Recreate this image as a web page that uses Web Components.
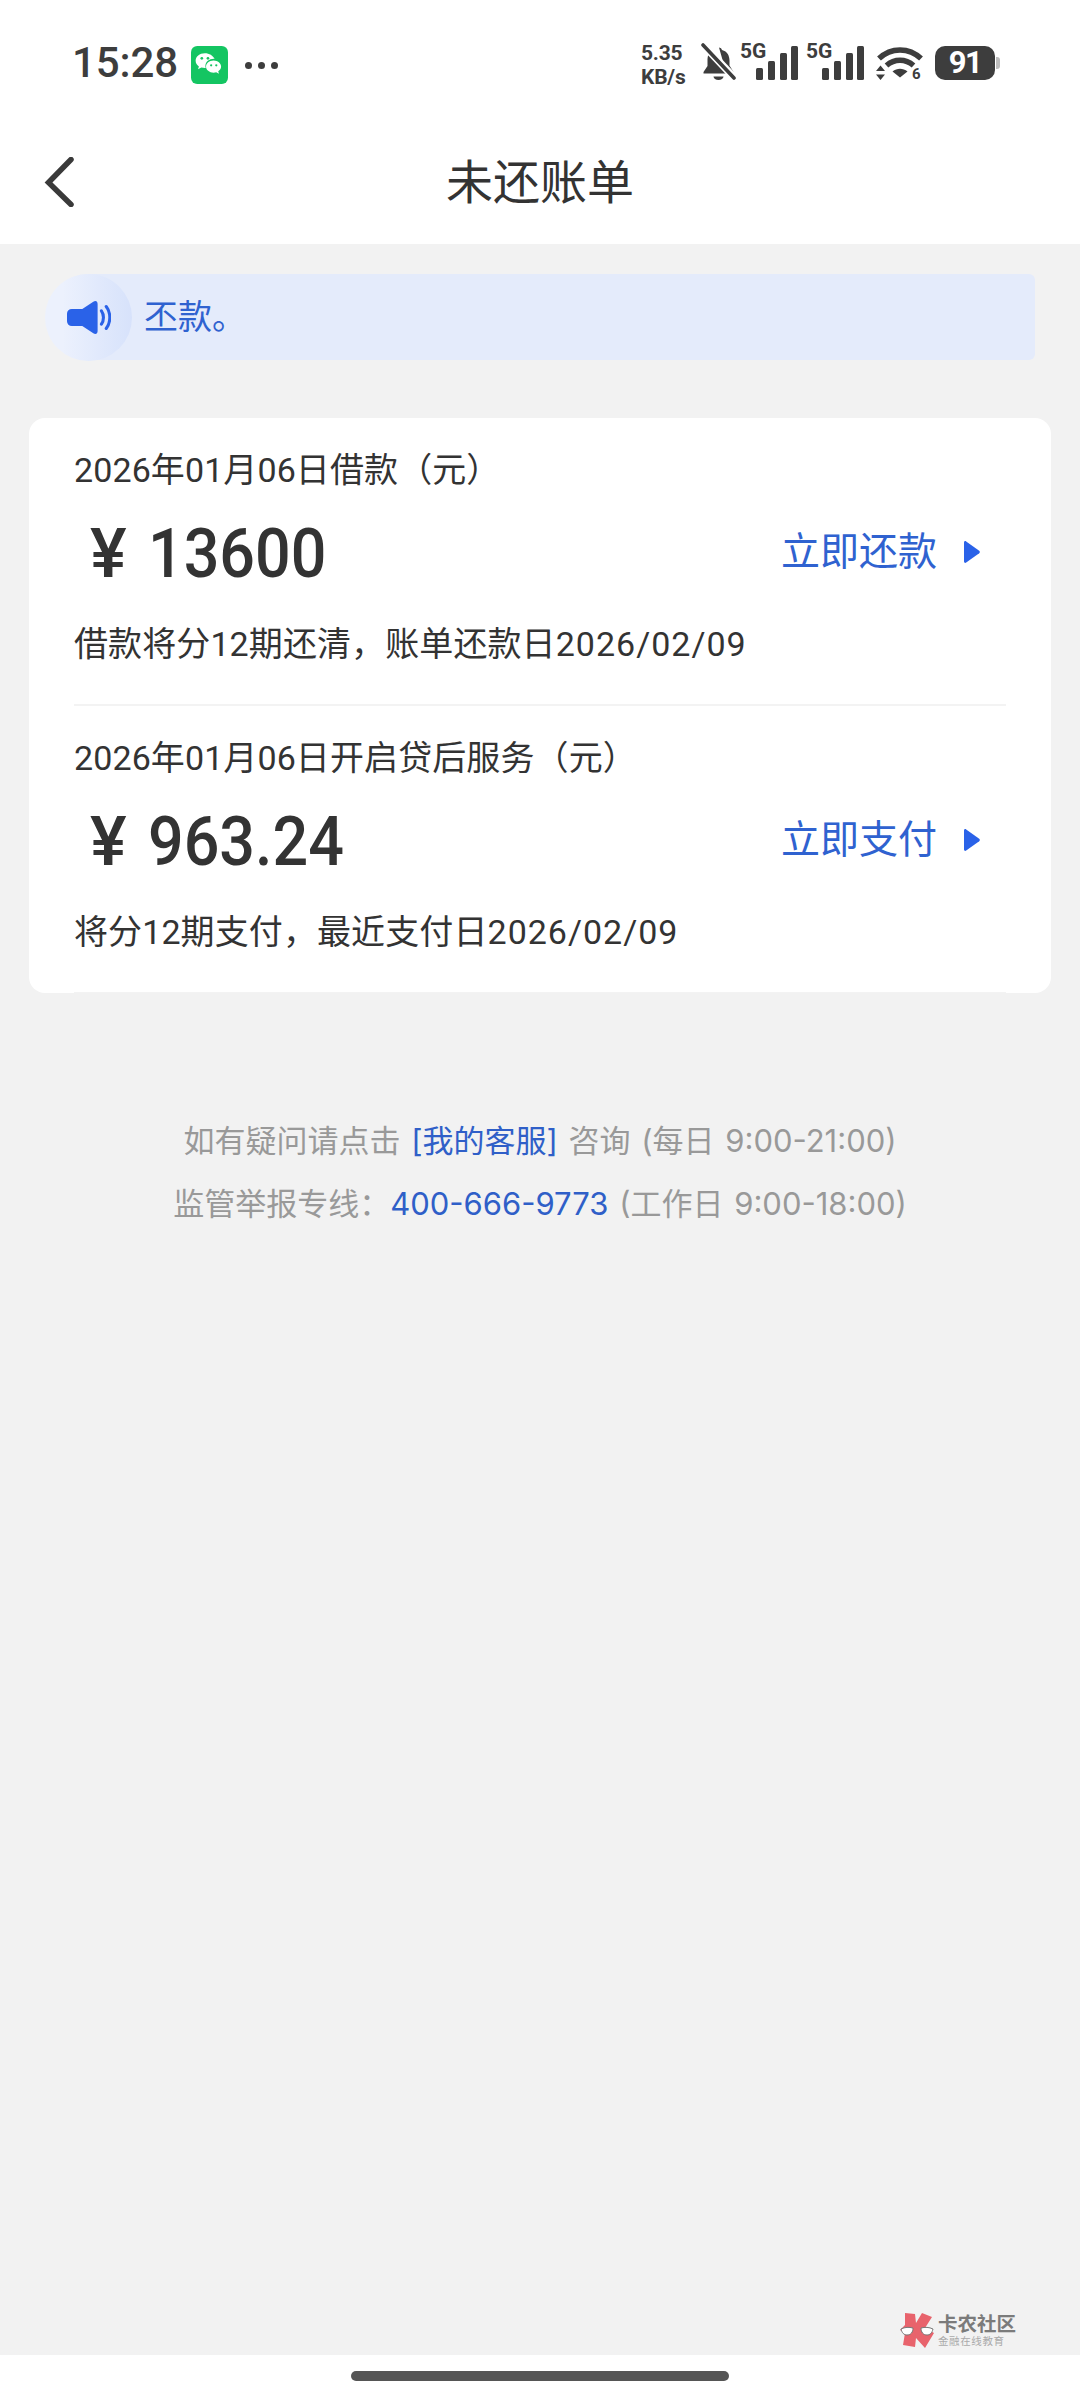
<!doctype html>
<html lang="zh-CN"><head><meta charset="utf-8">
<style>
html,body{margin:0;padding:0;background:#f2f2f2}
body{width:1080px;height:2400px;overflow:hidden;font-family:Roboto,"Noto Sans CJK SC",sans-serif;color:#333}
</style></head><body>
<x-app>
  <x-status time="15:28"></x-status>
  <x-nav>未还账单</x-nav>
  <x-notice>丕款。</x-notice>
  <x-card>
    <x-bill title="2026年01月06日借款（元）" amount="13600" action="立即还款" note="借款将分12期还清，账单还款日" date="2026/02/09"></x-bill>
    <x-bill title="2026年01月06日开启贷后服务（元）" amount="963.24" action="立即支付" note="将分12期支付，最近支付日" date="2026/02/09"></x-bill>
  </x-card>
  <x-help>
    <x-help-line>如有疑问请点击 <x-link>[我的客服]</x-link> 咨询 (每日 9:00-21:00)</x-help-line>
    <x-help-line>监管举报专线：<x-link>400-666-9773</x-link> (工作日 9:00-18:00)</x-help-line>
  </x-help>
  <x-watermark></x-watermark>
  <x-home></x-home>
</x-app>
<script>
const def=(name,html,init)=>customElements.define(name,class extends HTMLElement{
  constructor(){super();this.attachShadow({mode:'open'}).innerHTML=html;}
  connectedCallback(){if(init)init(this,this.shadowRoot);}
});
const CJK='Roboto,"Noto Sans CJK SC",sans-serif';
def('x-app',`<style>:host{display:flex;flex-direction:column;height:2400px;position:relative;background:#f2f2f2}</style><slot></slot>`);

const bars=`<svg width="42" height="34" viewBox="0 0 42 34"><g fill="#3d3d3d"><rect x="0" y="22" width="7" height="12" rx="1.5"/><rect x="12" y="15" width="7" height="19" rx="1.5"/><rect x="24" y="7" width="7" height="27" rx="1.5"/><rect x="35" y="0" width="7" height="34" rx="1.5"/></g></svg>`;
def('x-status',`<style>
:host{display:flex;align-items:flex-start;height:124px;background:#fff;box-sizing:border-box;padding:41px 0 0 72px;color:#3d3d3d;font-family:Roboto,sans-serif;position:relative}
.time{font-size:42px;font-weight:500;line-height:44px;width:103px;letter-spacing:-.1px}
.wx{margin:5px 0 0 16px}
.dots{margin:21px 0 0 17px;display:flex;gap:6px}
.dots i{width:7px;height:7px;border-radius:50%;background:#3d3d3d}
.right{margin-left:auto;display:flex;align-items:flex-start;width:359px;height:42px;margin-top:1px;margin-right:80px;position:relative}
.speed{width:58px;font-size:21px;font-weight:700;line-height:24px;margin-top:-1px;white-space:nowrap;letter-spacing:-.2px}
.bell{margin-top:1px;width:41px}
.sig{position:relative;width:66px;height:40px}
.sig span{position:absolute;left:0;top:-1px;font-size:21px;font-weight:700;line-height:20px}
.sig svg{position:absolute;left:16px;top:4px}
.wifi{margin:4px 0 0 4px;width:48px;overflow:visible}
.bat{margin:4px 0 0 11px;width:60px;height:34px;border-radius:10px;background:#3d3d3d;color:#fff;font-size:31px;font-weight:700;line-height:34px;text-align:center;position:relative;letter-spacing:-1.5px}
.bat:after{content:"";position:absolute;right:-5px;top:11px;width:4px;height:12px;border-radius:0 3px 3px 0;background:#bdbdbd}
</style>
<div class="time" id="t"></div>
<svg class="wx" width="37" height="38" viewBox="0 0 36 37"><rect width="36" height="37" rx="6" fill="#14c562"/>
<path d="M13.5 7C8.3 7 4.500 10.300 4.500 14.300c0 2.300 1.300 4.200 3.200 5.600l-.9 2.800 3.300-1.700c1.200.3 2.200.5 3.400.5h.8a7 7 0 0 1-.3-2c0-4 3.700-7 8.200-7h.8C21.400 9.300 17.800 7 13.500 7z" fill="#fff"/>
<path d="M22 14c-4.100 0-7.400 2.700-7.400 6s3.300 6 7.400 6c.9 0 1.700-.1 2.500-.4l2.700 1.400-.7-2.300c1.700-1.100 2.800-2.800 2.800-4.700 0-3.300-3.300-6-7.300-6z" fill="#fff"/>
<g fill="#14c562"><circle cx="10.500" cy="12" r="1.300"/><circle cx="16.500" cy="12" r="1.300"/><circle cx="19.600" cy="18.800" r="1.100"/><circle cx="24.600" cy="18.800" r="1.100"/></g></svg>
<div class="dots"><i></i><i></i><i></i></div>
<div class="right">
  <div class="speed">5.35<br>KB/s</div>
  <svg class="bell" width="38" height="38" viewBox="0 0 38 38"><path d="M18.500 4.500a3 3 0 0 1 3 2.500c5.500 1.400 7.500 6 7.500 10.500v5l4 6.500v1.500H3V29l4-6V16c0-1.400.4-3 1-4.500L26 31" fill="#3d3d3d"/><path d="M13 33.500h10a5 3.500 0 0 1-10 0z" fill="#3d3d3d"/><path d="M2 1l33 35" stroke="#fff" stroke-width="7.500"/><path d="M2.500 2l31 33" stroke="#3d3d3d" stroke-width="3.600" stroke-linecap="round"/></svg>
  <div class="sig"><span>5G</span>${bars}</div>
  <div class="sig"><span>5G</span>${bars}</div>
  <svg class="wifi" width="48" height="34" viewBox="0 0 48 34"><g fill="none" stroke="#3d3d3d" stroke-width="5.500"><path d="M3 12.500C15 1 33 1 45 12.500"/><path d="M10.500 19.500c8-7 19-7 27 0"/></g><path d="M16.500 25.500c4.500-3.600 10.500-3.600 15 0L24 31.500z" fill="#3d3d3d"/><path d="M4.500 19.500l4.500 5.500H0zM4.500 34L0 28.500h9z" fill="#3d3d3d"/><text x="36" y="33" font-family="Roboto" font-size="15" font-weight="700" fill="#3d3d3d">6</text></svg>
  <div class="bat">91</div>
</div>`,(h,s)=>{s.getElementById('t').textContent=h.getAttribute('time');});

def('x-nav',`<style>
:host{display:flex;align-items:center;justify-content:center;height:120px;background:#fff;position:relative;font:400 47px/64px ${CJK};color:#333;padding-bottom:2px;box-sizing:border-box}
svg{position:absolute;left:44px;top:33px}
</style><svg width="30" height="50" viewBox="0 0 30 50"><path d="M27 2.500L4.500 25.500 27 47.500" fill="none" stroke="#3a3a3a" stroke-width="5.500" stroke-linecap="round" stroke-linejoin="miter"/></svg><slot></slot>`);

def('x-notice',`<style>
:host{display:flex;align-items:center;height:86px;margin:30px 45px 0 46px;background:#e4ebfb;border-radius:43px 6px 6px 43px;color:#2f62d0;font:400 34px/86px ${CJK};position:relative}
.c{width:87px;height:87px;border-radius:50%;background:linear-gradient(90deg,#ecf1fd 20%,#d7e2fb);flex:none;display:flex;align-items:center;justify-content:center;margin-left:-1px}
.t{margin-left:12px;margin-top:-1px}
</style><div class="c"><svg width="44" height="35" viewBox="0 0 46 36"><path d="M5 9h11L27.500 1.500c2.500-1.500 4.500-.5 4.500 2.500v28c0 3-2 4-4.500 2.500L16 27H5a5 5 0 0 1-5-5V14a5 5 0 0 1 5-5z" fill="#2a62e8"/><path d="M36 11c2.800 4 2.800 10 0 14M41 6.500c5 6.500 5 16.500 0 23" fill="none" stroke="#2a62e8" stroke-width="3.200" stroke-linecap="round"/></svg></div><div class="t"><slot></slot></div>`);

def('x-card',`<style>:host{display:block;margin:58px 29px 0;background:#fff;border-radius:16px;height:575px;overflow:hidden}</style><slot></slot>`);

def('x-bill',`<style>
:host{display:block;height:288px;box-sizing:border-box;margin:0 45px;padding-top:30px;border-bottom:2px solid #f3f3f3;color:#333;font-family:${CJK}}
.l{font-size:34px;line-height:44px;white-space:nowrap;letter-spacing:.1px}
.m{display:flex;align-items:center;height:124px;justify-content:space-between}
.amt{font-size:69px;line-height:124px;font-weight:500;padding-left:16px;font-family:Roboto,sans-serif;display:flex}
.amt i{font-style:normal;margin-right:18px;width:40px;font-weight:500}
.amt span{transform:scaleX(.91);transform-origin:left;display:inline-block}
.act{display:flex;align-items:center;color:#2f62d0;font-size:39px;line-height:60px;padding-right:26px;margin-top:-4px}
.act svg{margin-left:27px}
.n{margin-top:6px}
.n span{letter-spacing:1px}
</style>
<div class="l" id="a"></div>
<div class="m"><div class="amt"><i>¥</i><span id="b"></span></div><div class="act"><span id="c"></span><svg width="16" height="22" viewBox="0 0 16 22"><path d="M0 1.500C0 .3 1.200-.3 2.200.4l13 9.300c.8.6.8 2 0 2.600l-13 9.300C1.200 22.300 0 21.700 0 20.500z" fill="#2a62e8"/></svg></div></div>
<div class="l n"><b id="d" style="font-weight:400"></b><span id="e"></span></div>`,(h,s)=>{
  s.getElementById('a').textContent=h.getAttribute('title');
  s.getElementById('b').textContent=h.getAttribute('amount');
  s.getElementById('c').textContent=h.getAttribute('action');
  s.getElementById('d').textContent=h.getAttribute('note');
  s.getElementById('e').textContent=h.getAttribute('date');
});

def('x-help',`<style>
:host{display:flex;flex-direction:column;align-items:center;margin-top:116px;color:#999;font:400 31px/63px Inter,"Noto Sans CJK SC",sans-serif;white-space:nowrap;word-spacing:2px}
</style><slot></slot>`);
def('x-help-line',`<style>:host{display:block;height:63px}</style><slot></slot>`);
def('x-link',`<style>:host{display:inline;color:#2f5fc8}</style><slot></slot>`);

def('x-watermark',`<style>
:host{position:absolute;left:900px;top:2312px;display:flex;align-items:center;gap:4px;font-family:"Noto Sans CJK SC",sans-serif}
.a{font-size:19.500px;font-weight:700;line-height:22px;color:#7b7b7b;white-space:nowrap}
.b{font-size:10.500px;line-height:14px;color:#aaa;letter-spacing:.6px;white-space:nowrap}
</style><svg width="34" height="36" viewBox="0 0 34 36"><path d="M5 1l10 1 1 9 6-10 10 4-7 11 9 5-9 15-9-10-1 9-12-2 2-12-5-3 5-5z" fill="#e8636c"/><g fill="#fff" stroke="#777" stroke-width="1"><path d="M1 17c4-2 8-2 12-1 0 4-2 7-6 7-3 0-5-2-6-6z"/><path d="M33 17c-4-2-8-2-12-1 0 4 2 7 6 7 3 0 5-2 6-6z"/></g></svg><div><div class="a">卡农社区</div><div class="b">金融在线教育</div></div>`);

def('x-home',`<style>
:host{position:absolute;left:0;right:0;bottom:0;height:45px;background:#fff;display:flex;justify-content:center}
i{display:block;width:378px;height:10px;border-radius:5px;background:#555;margin-top:16px}
</style><i></i>`);
</script>
</body></html>
